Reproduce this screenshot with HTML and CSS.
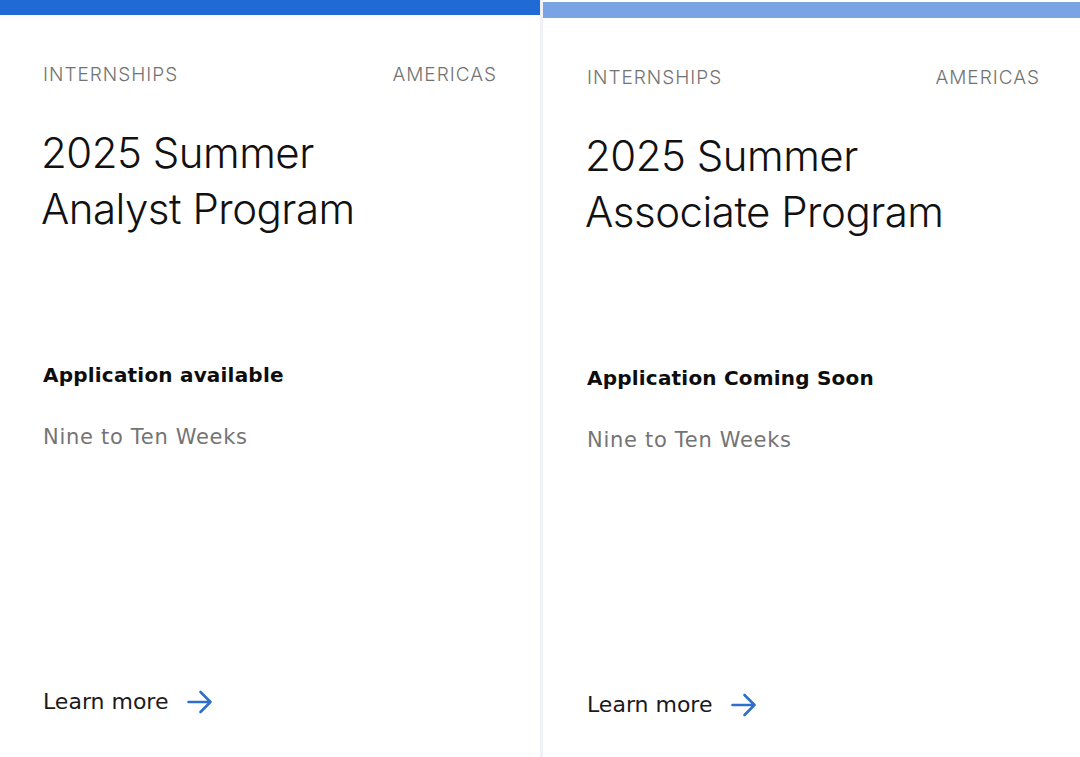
FILE: index.html
```html
<!DOCTYPE html>
<html lang="en">
<head>
<meta charset="utf-8">
<title>Programs</title>
<link rel="stylesheet" href="styles.css">
</head>
<body>
<div class="cards">
  <article class="card card-primary">
    <div class="bar"></div>
    <div class="body">
      <div class="meta"><span>INTERNSHIPS</span><span>AMERICAS</span></div>
      <h2 class="title">2025 Summer<br>Analyst Program</h2>
      <p class="status">Application available</p>
      <p class="duration">Nine to Ten Weeks</p>
      <a class="more" href="#">Learn more
        <svg class="arrow" width="26" height="24" viewBox="0 0 26 24" aria-hidden="true"><path d="M1.5 12H23.5M13.5 2L23.5 12L13.5 22" fill="none" stroke="#2f6fcc" stroke-width="2.6" stroke-linecap="round" stroke-linejoin="round"/></svg>
      </a>
    </div>
  </article>
  <div class="divider"></div>
  <article class="card card-secondary">
    <div class="bar"></div>
    <div class="body">
      <div class="meta"><span>INTERNSHIPS</span><span>AMERICAS</span></div>
      <h2 class="title">2025 Summer<br>Associate Program</h2>
      <p class="status">Application Coming Soon</p>
      <p class="duration">Nine to Ten Weeks</p>
      <a class="more" href="#">Learn more
        <svg class="arrow" width="26" height="24" viewBox="0 0 26 24" aria-hidden="true"><path d="M1.5 12H23.5M13.5 2L23.5 12L13.5 22" fill="none" stroke="#2f6fcc" stroke-width="2.6" stroke-linecap="round" stroke-linejoin="round"/></svg>
      </a>
    </div>
  </article>
</div>
</body>
</html>
```
FILE: styles.css
```css
html, body {
  margin: 0;
  padding: 0;
  background: #ffffff;
  overflow: hidden;
}
body {
  font-family: Inter, "Liberation Sans", sans-serif;
  color: #111111;
}
.cards {
  display: flex;
  width: 1080px;
  height: 757px;
  overflow: hidden;
}
.card {
  flex: 0 0 540px;
  width: 540px;
  display: flex;
  flex-direction: column;
}
.card-secondary {
  margin-top: 2px;
}
.divider {
  flex: 0 0 3px;
  background: #eff1f7;
}
.bar {
  height: 15px;
  background: #1f6ad4;
}
.card-secondary .bar {
  height: 16px;
  background: #7aa3e5;
}
.body {
  padding: 48px 43px 0 43px;
  display: flex;
  flex-direction: column;
}
.card-secondary .body {
  padding-left: 44px;
}
.meta {
  display: flex;
  justify-content: space-between;
  font-size: 19px;
  line-height: 24px;
  font-weight: 300;
  letter-spacing: 1px;
  color: #737373;
}
.title {
  margin: 38px 0 0 -2px;
  font-size: 42px;
  line-height: 56px;
  font-weight: 300;
  color: #111111;
  letter-spacing: -0.5px;
}
.status {
  margin: 125px 0 0 0;
  font-family: "DejaVu Sans", Inter, sans-serif;
  font-size: 20px;
  line-height: 26px;
  font-weight: 700;
  letter-spacing: 0.2px;
  color: #0d0d0d;
}
.duration {
  margin: 36px 0 0 0;
  font-family: "DejaVu Sans", Inter, sans-serif;
  font-size: 21px;
  line-height: 26px;
  font-weight: 400;
  letter-spacing: 0.7px;
  color: #747474;
}
.more {
  margin-top: 238px;
  display: flex;
  align-items: center;
  gap: 19px;
  font-family: "DejaVu Sans", Inter, sans-serif;
  font-size: 22px;
  line-height: 28px;
  font-weight: 400;
  color: #1a1a1a;
  text-decoration: none;
}
.arrow {
  display: block;
}
```
